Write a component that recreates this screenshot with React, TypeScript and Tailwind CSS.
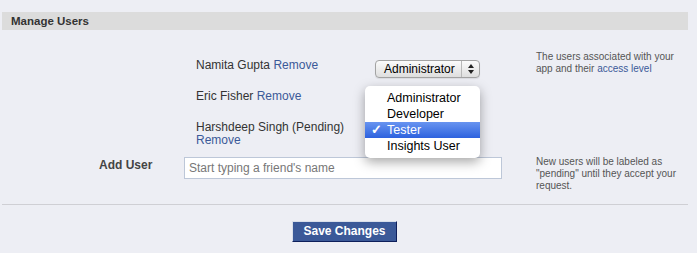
const users = [
  { id: 1, name: 'Namita Gupta', role: 'Administrator' },
  { id: 2, name: 'Eric Fisher', role: 'Developer' },
  { id: 3, name: 'Harshdeep Singh (Pending)', role: 'Tester' },
]

const roles = ['Administrator', 'Developer', 'Tester', 'Insights User']

function RoleSelect({ value }: { value: string }) {
  return (
    <div className="flex h-[18px] w-[105px] items-stretch rounded-[4px] border border-[#a3a3a3] bg-gradient-to-b from-[#fbfbfb] to-[#dedede] text-[12px] leading-[16px] text-black shadow-[0_1px_1px_rgba(0,0,0,0.08)]">
      <span className="flex-1 pl-[8px]">{value}</span>
      <span className="flex w-[18px] items-center justify-center border-l border-[#b8b8b8]">
        {/* up/down arrows */}
        <svg width="6" height="10" viewBox="0 0 6 10" className="fill-[#222]">
          <polygon points="3,0 6,4 0,4" />
          <polygon points="0,6 6,6 3,10" />
        </svg>
      </span>
    </div>
  )
}

export default function App() {
  return (
    <div className="h-[253px] w-[697px] bg-[#edeef4] pt-[12px] font-['Liberation_Sans',Arial,sans-serif] text-[12px] text-[#333]">
      <div className="mx-[2px] h-[18px] w-[686px] bg-[#dcdcdc] pl-[9px] text-[11.5px] font-bold leading-[18px] text-[#333]">
        Manage Users
      </div>

      <div className="relative flex pt-[20px]">
        <div className="w-[196px] shrink-0" />
        <div className="flex w-[340px] flex-col gap-[10px] pt-[7px]">
          {users.map((user) => (
            <div key={user.id} className="flex items-start">
              <div className="w-[170px] pt-[2px] leading-[13px]">
                {user.name} <span className="text-[#3b5998]">Remove</span>
              </div>
              <div className="ml-[9px] mt-[3px]">
                <RoleSelect value={user.role} />
              </div>
            </div>
          ))}
        </div>
        <div className="pt-[1px] text-[10px] leading-[12px] text-[#555]">
          The users associated with your
          <br />
          app and their <span className="text-[#3b5998]">access level</span>
        </div>

        <div className="absolute left-[365px] top-[56px] w-[115px] rounded-[5px] bg-white py-[4px] text-[12.5px] leading-[16px] text-black shadow-[0_4px_12px_rgba(0,0,0,0.35)]">
          {roles.map((role) => (
            <div
              key={role}
              className={
                role === 'Tester'
                  ? 'flex bg-gradient-to-b from-[#6894f0] to-[#2d61de] text-white'
                  : 'flex'
              }
            >
              <span className="w-[22px] pl-[6px] font-bold">{role === 'Tester' ? '✓' : ''}</span>
              <span>{role}</span>
            </div>
          ))}
        </div>
      </div>

      <div className="flex pt-[10px]">
        <div className="w-[184px] shrink-0 pl-[99px] mt-[-1px] font-bold text-[#444]">Add User</div>
        <div className="w-[352px]">
          <div className="h-[22px] w-[318px] border border-[#bdc7d8] bg-white pl-[4px] leading-[20px] text-[#777]">
            Start typing a friend's name
          </div>
        </div>
        <div className="mt-[-1px] text-[10px] leading-[12px] text-[#555]">
          New users will be labeled as
          <br />
          "pending" until they accept your
          <br />
          request.
        </div>
      </div>

      <div className="mx-[2px] mt-[12px] h-px w-[686px] bg-[#cfcfd4]" />

      <div className="flex justify-center pt-[16px] pr-[8px]">
        <button className="h-[21px] w-[105px] border border-t-[#d9dfea] border-l-[#d9dfea] border-r-[#0e1f5b] border-b-[#0e1f5b] bg-[#3b5998] text-[12px] font-bold leading-[19px] text-white">
          Save Changes
        </button>
      </div>
    </div>
  )
}
